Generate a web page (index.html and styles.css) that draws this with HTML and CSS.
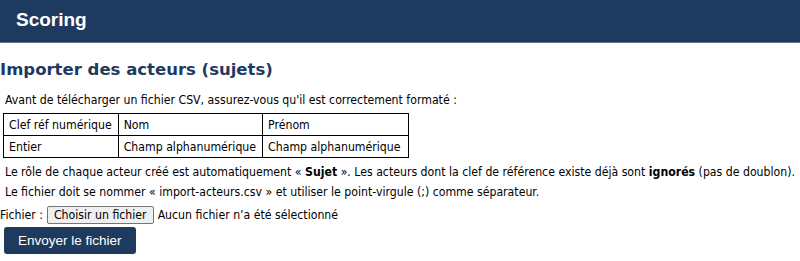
FILE: index.html
```html
<!DOCTYPE html>
<html lang="fr">
<head>
  <meta charset="UTF-8" />
  <title>Scoring - Importer des acteurs</title>
  <link rel="stylesheet" href="styles.css">
</head>
<body>

<header class="topbar">
  <span class="brand">Scoring</span>
</header>

<main class="content">
  <h1 class="page-title">Importer des acteurs (sujets)</h1>

  <p class="info">Avant de télécharger un fichier CSV, assurez-vous qu'il est correctement formaté :</p>

  <table class="format-table">
    <tr><td>Clef réf numérique</td><td>Nom</td><td>Prénom</td></tr>
    <tr><td>Entier</td><td>Champ alphanumérique</td><td>Champ alphanumérique</td></tr>
  </table>

  <p class="info">Le rôle de chaque acteur créé est automatiquement « <b>Sujet</b> ». Les acteurs dont la clef de référence existe déjà sont <b>ignorés</b> (pas de doublon).</p>
  <p class="info">Le fichier doit se nommer « import-acteurs.csv » et utiliser le point-virgule (;) comme séparateur.</p>

  <form class="upload-form" onsubmit="return false">
    <div class="file-row">
      <label for="csvFile">Fichier :</label>
      <span class="file-btn">Choisir un fichier</span>
      <span class="file-name">Aucun fichier n’a été sélectionné</span>
    </div>
    <button type="submit" class="submit-btn">Envoyer le fichier</button>
  </form>
</main>

</body>
</html>
```

FILE: styles.css
```css
body {
  margin: 0;
  font-family: "DejaVu Sans Condensed", "DejaVu Sans", sans-serif;
  font-size: 12.2px;
  color: #000;
  background: white;
}

.topbar {
  height: 43px;
  background: #1f3a5f;
  border-bottom: 1px solid #5b7391;
  display: flex;
  align-items: center;
  padding: 0 16px 2px;
  box-sizing: border-box;
}

.brand {
  font-family: "Liberation Sans", Arial, sans-serif;
  font-weight: bold;
  font-size: 19px;
  color: white;
}

.content {
  padding: 0 4px;
}

.page-title {
  font-family: "DejaVu Sans", sans-serif;
  font-size: 16.5px;
  font-weight: bold;
  color: #1f3a5f;
  margin: 17px 0 14px -4px;
}

.info {
  margin: 0 0 5px 1px;
  line-height: 15px;
}

.format-table {
  border-collapse: collapse;
  margin: 4px 0 7px -1px;
}

.format-table td {
  border: 1px solid #000;
  padding: 0 6px 0 5px;
  height: 21px;
}

.format-table td:last-child {
  padding-right: 8px;
}

.upload-form {
  margin-top: 6px;
}

.file-row {
  display: flex;
  align-items: center;
  gap: 4px;
  margin-left: -4px;
}

.file-btn {
  border: 1px solid #767676;
  border-radius: 2px;
  background: #efefef;
  padding: 1px 6px;
}

.submit-btn {
  margin-top: 3px;
  background: #1f3a5f;
  color: white;
  border: none;
  border-radius: 3px;
  font-family: "Liberation Sans", Arial, sans-serif;
  font-size: 13.5px;
  padding: 6px 14px;
  cursor: pointer;
}
```
